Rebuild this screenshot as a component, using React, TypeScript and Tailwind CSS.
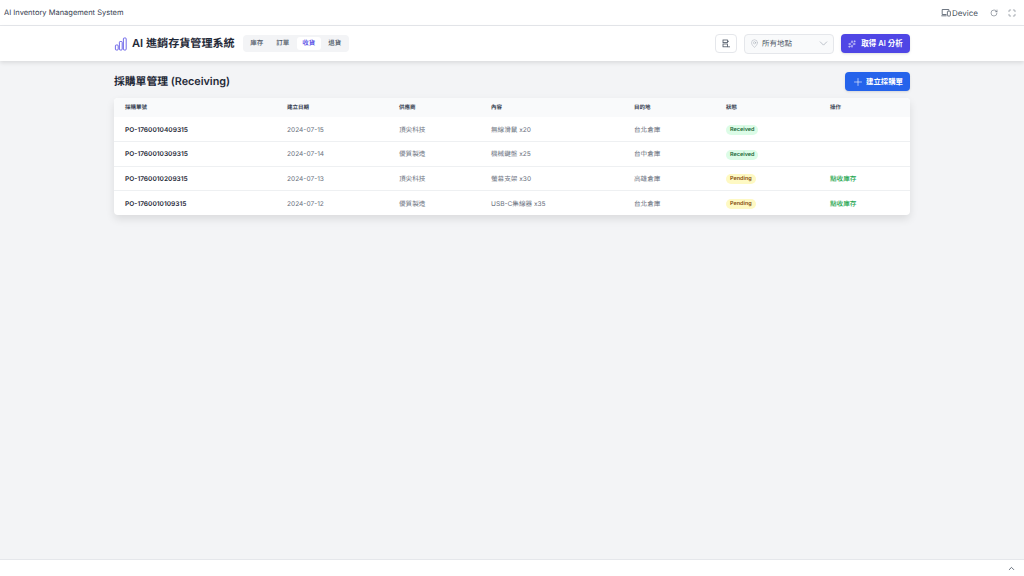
import React from 'react';
import { ChevronDown, ChevronUp, MapPin, Maximize, Plus, RotateCw, Sparkles } from 'lucide-react';

interface Order {
  id: string;
  date: string;
  supplier: string;
  content: string;
  destination: string;
  status: 'Received' | 'Pending';
}

const orders: Order[] = [
  { id: 'PO-1760010409315', date: '2024-07-15', supplier: '頂尖科技', content: '無線滑鼠 x20', destination: '台北倉庫', status: 'Received' },
  { id: 'PO-1760010309315', date: '2024-07-14', supplier: '優質製造', content: '機械鍵盤 x25', destination: '台中倉庫', status: 'Received' },
  { id: 'PO-1760010209315', date: '2024-07-13', supplier: '頂尖科技', content: '螢幕支架 x30', destination: '高雄倉庫', status: 'Pending' },
  { id: 'PO-1760010109315', date: '2024-07-12', supplier: '優質製造', content: 'USB-C集線器 x35', destination: '台北倉庫', status: 'Pending' },
];

const tabs = ['庫存', '訂單', '收貨', '退貨'];

const App: React.FC = () => {
  return (
    <div className="h-[576px] w-[1024px] overflow-hidden flex flex-col bg-[#f3f4f6] font-['Inter','Noto_Sans_CJK_TC',sans-serif] text-[#1f2937] [text-rendering:geometricPrecision]">
      {/* Preview bar */}
      <div className="h-[26px] shrink-0 bg-white border-b border-[#e5e7eb] flex items-center justify-between pl-[4px] pr-[8px]">
        <span className="text-[7.5px] text-[#374151]">AI Inventory Management System</span>
        <div className="flex items-center text-[#4b5563]">
          <svg width="10" height="9" viewBox="0 0 10 9" fill="none" stroke="currentColor" strokeWidth="0.8">
            <path d="M5.5 6.5H1.2V1.5h6.6v1.2" />
            <path d="M0.3 7.8h5.2" />
            <rect x="6.4" y="3.2" width="3" height="4.8" rx="0.5" />
          </svg>
          <span className="text-[8px] ml-[1px]">Device</span>
          <RotateCw size={8} strokeWidth={1.5} className="ml-[12px]" />
          <Maximize size={8} strokeWidth={1.5} className="ml-[10px]" />
        </div>
      </div>

      {/* App header */}
      <header className="h-[35px] shrink-0 bg-white shadow-[0_2px_4px_rgba(0,0,0,0.1)] flex items-center justify-between pl-[114px] pr-[114px] relative">
        <div className="flex items-center">
          <svg width="14" height="14" viewBox="0 0 14 14" fill="none" stroke="#4f46e5" strokeWidth="0.8">
            <rect x="1.4" y="8" width="2.8" height="5" rx="0.8" />
            <rect x="5.4" y="4.5" width="2.8" height="8.5" rx="0.8" />
            <rect x="9.4" y="1" width="2.8" height="12" rx="0.8" />
          </svg>
          <span className="ml-[4px] text-[11.1px] font-semibold text-[#1f2937]">AI 進銷存貨管理系統</span>
          <nav className="ml-[8px] flex items-center gap-[2px] bg-[#f3f4f6] rounded-[4px] p-[2px] h-[17px]">
            {tabs.map((tab) => (
              <span
                key={tab}
                className={
                  tab === '收貨'
                    ? 'w-[24px] h-[13px] flex items-center justify-center rounded-[3px] bg-white text-[6.5px] font-medium text-[#4f46e5]'
                    : 'w-[24px] h-[13px] flex items-center justify-center text-[6.5px] font-medium text-[#4b5563]'
                }
              >
                {tab}
              </span>
            ))}
          </nav>
        </div>
        <div className="flex items-center">
          <button className="w-[22px] h-[19px] bg-white border border-[#e5e7eb] rounded-[4px] flex items-center justify-center">
            <svg width="9" height="9" viewBox="0 0 9 9" fill="none" stroke="#4b5563" strokeWidth="0.8">
              <rect x="1" y="1" width="4.5" height="2.6" />
              <rect x="1" y="5" width="4.5" height="2.8" />
              <path d="M5.5 7.8h2.5M5.5 2.3h1.5" />
            </svg>
          </button>
          <div className="ml-[7px] w-[90px] h-[20px] bg-[#f9fafb] border border-[#e5e7eb] rounded-[4px] flex items-center pl-[5px] pr-[3px]">
            <MapPin size={9} strokeWidth={1.2} className="text-[#9ca3af]" />
            <span className="ml-[3px] text-[7.5px] text-[#4b5563]">所有地點</span>
            <ChevronDown size={13} strokeWidth={1.2} className="ml-auto text-[#9ca3af]" />
          </div>
          <button className="ml-[7px] w-[69px] h-[19px] bg-[#4f46e5] rounded-[4px] shadow-sm flex items-center justify-center text-white text-[7.5px] font-semibold">
            <Sparkles size={8} strokeWidth={1.5} />
            <span className="ml-[5px]">取得 AI 分析</span>
          </button>
        </div>
      </header>

      {/* Main content */}
      <main className="flex-1 px-[114px] pt-[11px]">
        <div className="flex items-center justify-between h-[19px]">
          <h1 className="text-[10.8px] font-semibold text-[#1f2937] pt-[1px]">採購單管理 (Receiving)</h1>
          <button className="w-[65px] h-[19px] bg-[#2563eb] rounded-[4px] shadow-sm flex items-center justify-center text-white text-[7.4px] font-semibold">
            <Plus size={12} strokeWidth={1.2} />
            <span className="ml-[2px]">建立採購單</span>
          </button>
        </div>

        <div className="mt-[7px] bg-white rounded-[4px] shadow-[0_4px_8px_rgba(0,0,0,0.1)] overflow-hidden">
          <table className="w-full table-fixed border-collapse">
            <thead className="bg-[#f9fafb]">
              <tr className="h-[19px] text-left text-[5.5px] text-[#374151]">
                <th className="w-[162px] pl-[11px] pt-[2px] font-semibold">採購單號</th>
                <th className="w-[112px] pl-[11px] pt-[2px] font-semibold">建立日期</th>
                <th className="w-[92px] pl-[11px] pt-[2px] font-semibold">供應商</th>
                <th className="w-[143px] pl-[11px] pt-[2px] font-semibold">內容</th>
                <th className="w-[92px] pl-[11px] pt-[2px] font-semibold">目的地</th>
                <th className="w-[104px] pl-[11px] pt-[2px] font-semibold">狀態</th>
                <th className="pl-[11px] pt-[2px] font-semibold">操作</th>
              </tr>
            </thead>
            <tbody>
              {orders.map((order, i) => (
                <tr
                  key={order.id}
                  className={i < orders.length - 1 ? 'h-[24.6px] border-b border-[#eef0f2]' : 'h-[24px]'}
                >
                  <td className="pl-[11px] pt-[3px] text-[6.6px] font-semibold text-[#1f2937]">{order.id}</td>
                  <td className="pl-[11px] pt-[3px] text-[6.6px] text-[#6b7280]">{order.date}</td>
                  <td className="pl-[11px] pt-[3px] text-[6.6px] text-[#6b7280]">{order.supplier}</td>
                  <td className="pl-[11px] pt-[3px] text-[6.6px] text-[#6b7280]">{order.content}</td>
                  <td className="pl-[11px] pt-[3px] text-[6.6px] text-[#6b7280]">{order.destination}</td>
                  <td className="pl-[11px] pt-[2px] align-middle">
                    <span
                      className={
                        order.status === 'Received'
                          ? 'flex w-fit items-center h-[10px] px-[4px] rounded-full bg-[#dcfce7] text-[#166534] text-[5.5px] font-semibold'
                          : 'flex w-fit items-center h-[10px] px-[4px] rounded-full bg-[#fef9c3] text-[#854d0e] text-[5.5px] font-semibold'
                      }
                    >
                      {order.status}
                    </span>
                  </td>
                  <td className="pl-[11px] pt-[3px] text-[6.6px] font-medium text-[#16a34a]">
                    {order.status === 'Pending' ? '點收庫存' : ''}
                  </td>
                </tr>
              ))}
            </tbody>
          </table>
        </div>
      </main>

      {/* Footer strip */}
      <div className="h-[17px] shrink-0 bg-white border-t border-[#e5e7eb] flex items-center justify-end pr-[8px]">
        <ChevronUp size={9} strokeWidth={2} className="text-[#374151]" />
      </div>
    </div>
  );
};

export default App;
